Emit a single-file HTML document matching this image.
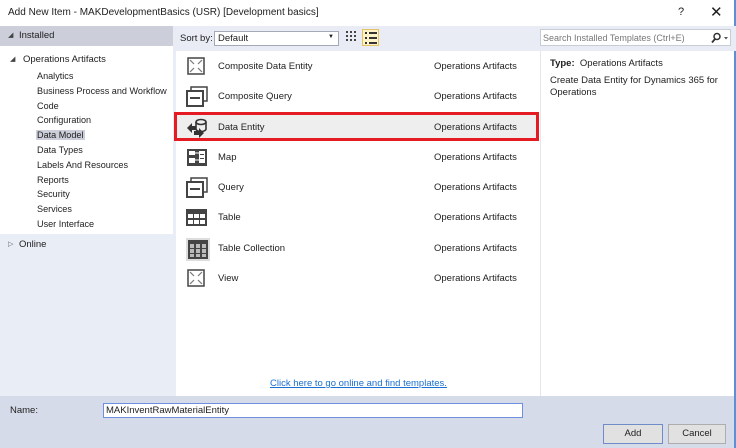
<!DOCTYPE html>
<html><head><style>
*{margin:0;padding:0;box-sizing:border-box}
body{width:736px;height:448px;overflow:hidden;background:#fff;font-family:"Liberation Sans",sans-serif;font-size:9.5px;color:#1e1e1e;position:relative}
.a{position:absolute;white-space:nowrap}
.row{position:absolute;left:176px;width:362px;height:30px}
.row .n{position:absolute;left:42px;top:10px}
.row .c{position:absolute;left:258px;top:10px}
.row svg{position:absolute;left:10px;top:5px}
</style></head><body>
<div class="a" style="left:0;top:0;width:736px;height:26px;background:#fff"></div>
<div class="a" style="left:8px;top:7px;font-size:10px">Add New Item - MAKDevelopmentBasics (USR) [Development basics]</div>
<div class="a" style="left:678px;top:6px;font-size:11px">?</div>
<div class="a" style="left:710px;top:3px;font-size:15px">✕</div>
<div class="a" style="left:734px;top:0;width:2px;height:448px;background:#5b8fd6"></div>
<!-- left -->
<div class="a" style="left:0;top:26px;width:176px;height:370px;background:#e9edf6"></div>
<div class="a" style="left:0;top:26px;width:173px;height:20px;background:#ccced9"></div>
<div class="a" style="left:8px;top:31px;font-size:7px;color:#444">◢</div>
<div class="a" style="left:19px;top:30px">Installed</div>
<div class="a" style="left:0;top:46px;width:173px;height:188px;background:#fff"></div>
<div class="a" style="left:10px;top:55px;font-size:7px;color:#444">◢</div>
<div class="a" style="left:23px;top:54px">Operations Artifacts</div>
<div class="a" style="left:37px;top:69px;line-height:14.8px;font-size:9.1px">Analytics<br>Business Process and Workflow<br>Code<br>Configuration<br><span style="background:#ccced9;padding:0 1px;margin-left:-1px">Data Model</span><br>Data Types<br>Labels And Resources<br>Reports<br>Security<br>Services<br>User Interface</div>
<div class="a" style="left:8px;top:240px;font-size:7px;color:#666">▷</div>
<div class="a" style="left:19px;top:239px">Online</div>
<!-- middle -->
<div class="a" style="left:173px;top:26px;width:563px;height:25px;background:#e9ecf5"></div>
<div class="a" style="left:180px;top:33px">Sort by:</div>
<div class="a" style="left:214px;top:31px;width:125px;height:15px;background:#fff;border:1px solid #a5a9b5"></div>
<div class="a" style="left:218px;top:33px">Default</div>
<div class="a" style="left:328px;top:34px;font-size:6px">▼</div>
<svg class="a" style="left:346px;top:31px" width="12" height="12"><g fill="#444"><rect x="0" y="0" width="2" height="2"/><rect x="4" y="0" width="2" height="2"/><rect x="8" y="0" width="2" height="2"/><rect x="0" y="4" width="2" height="2"/><rect x="4" y="4" width="2" height="2"/><rect x="8" y="4" width="2" height="2"/><rect x="0" y="8" width="2" height="2"/><rect x="4" y="8" width="2" height="2"/><rect x="8" y="8" width="2" height="2"/></g></svg>
<div class="a" style="left:362px;top:29px;width:17px;height:17px;background:#fdf3c8;border:1px solid #e5c365"></div>
<svg class="a" style="left:365px;top:32px" width="12" height="12"><g fill="#333"><rect x="0" y="0" width="2" height="2"/><rect x="4" y="0" width="8" height="2"/><rect x="0" y="5" width="2" height="2"/><rect x="4" y="5" width="8" height="2"/><rect x="0" y="10" width="2" height="2"/><rect x="4" y="10" width="8" height="2"/></g></svg>
<div class="a" style="left:540px;top:51px;width:1px;height:345px;background:#e3e5ea"></div>
<div class="a" style="left:540px;top:29px;width:191px;height:17px;background:#fff;border:1px solid #c8ccd6"></div>
<div class="a" style="left:543px;top:33px;color:#777;font-size:9px">Search Installed Templates (Ctrl+E)</div>
<svg class="a" style="left:710px;top:32px" width="20" height="12"><circle cx="7" cy="4.5" r="3" fill="none" stroke="#333" stroke-width="1.5"/><path d="M5 7l-3 3.5" stroke="#333" stroke-width="1.8"/><path d="M14 5h4l-2 2.5z" fill="#555"/></svg>

<div class="a" style="left:174px;top:112px;width:365px;height:29px;background:#eeeeee;border:3px solid #e41b23"></div>

<div class="row" style="top:51px"><svg width="20" height="20"><rect x="2" y="2" width="16" height="16" fill="none" stroke="#444" stroke-width="1.5"/><path d="M4 4l4 4M16 4l-4 4M4 16l4-4M16 16l-4-4" stroke="#777" stroke-width="1.2"/></svg><span class="n">Composite Data Entity</span><span class="c">Operations Artifacts</span></div>
<div class="row" style="top:81px"><svg width="22" height="22"><rect x="5" y="1" width="16" height="14" fill="none" stroke="#444" stroke-width="1.5"/><rect x="1" y="5" width="16" height="15" fill="#fff" stroke="#444" stroke-width="2"/><rect x="4" y="11" width="10" height="2" fill="#444"/></svg><span class="n">Composite Query</span><span class="c">Operations Artifacts</span></div>
<div class="row" style="top:112px"><svg width="22" height="22"><path d="M1 11l5-5v3h4v4h-4v3z" fill="#333"/><ellipse cx="15" cy="5" rx="5" ry="2.5" fill="none" stroke="#333" stroke-width="1.6"/><path d="M10 5v7c0 1.5 2.5 2.5 5 2.5s5-1 5-2.5v-7" fill="none" stroke="#333" stroke-width="1.6"/><path d="M8 14h5v-3l5 5-5 5v-3h-5z" fill="#333"/></svg><span class="n">Data Entity</span><span class="c">Operations Artifacts</span></div>
<div class="row" style="top:142px"><svg width="22" height="22"><rect x="1" y="2" width="20" height="17" fill="#444"/><rect x="3" y="4" width="6" height="4" fill="#fff"/><rect x="3" y="11" width="6" height="5" fill="#fff"/><rect x="13" y="4" width="6" height="12" fill="#fff"/><rect x="14" y="7" width="4" height="1" fill="#444"/><rect x="14" y="11" width="4" height="1" fill="#444"/><path d="M9 6h4M9 13h4" stroke="#fff"/></svg><span class="n">Map</span><span class="c">Operations Artifacts</span></div>
<div class="row" style="top:172px"><svg width="22" height="22"><rect x="5" y="1" width="16" height="14" fill="none" stroke="#444" stroke-width="1.5"/><rect x="1" y="5" width="16" height="15" fill="#fff" stroke="#444" stroke-width="2"/><rect x="4" y="11" width="10" height="2" fill="#444"/></svg><span class="n">Query</span><span class="c">Operations Artifacts</span></div>
<div class="row" style="top:202px"><svg width="22" height="22"><rect x="0" y="2" width="21" height="17" fill="#444"/><g fill="#fff"><rect x="2" y="7" width="5" height="4"/><rect x="8" y="7" width="5" height="4"/><rect x="14" y="7" width="5" height="4"/><rect x="2" y="13" width="5" height="4"/><rect x="8" y="13" width="5" height="4"/><rect x="14" y="13" width="5" height="4"/></g></svg><span class="n">Table</span><span class="c">Operations Artifacts</span></div>
<div class="row" style="top:233px"><svg width="24" height="24"><rect x="0" y="0" width="24" height="23" fill="#ddd"/><rect x="2" y="2" width="20" height="19" fill="#444"/><g fill="#bbb"><rect x="4" y="6" width="4" height="4"/><rect x="10" y="6" width="4" height="4"/><rect x="16" y="6" width="4" height="4"/><rect x="4" y="11" width="4" height="4"/><rect x="10" y="11" width="4" height="4"/><rect x="16" y="11" width="4" height="4"/><rect x="4" y="16" width="4" height="3"/><rect x="10" y="16" width="4" height="3"/><rect x="16" y="16" width="4" height="3"/></g></svg><span class="n">Table Collection</span><span class="c">Operations Artifacts</span></div>
<div class="row" style="top:263px"><svg width="20" height="20"><rect x="2" y="2" width="16" height="16" fill="none" stroke="#444" stroke-width="1.5"/><path d="M4 4l4 4M16 4l-4 4M4 16l4-4M16 16l-4-4" stroke="#777" stroke-width="1.2"/></svg><span class="n">View</span><span class="c">Operations Artifacts</span></div>

<div class="a" style="left:270px;top:378px;color:#1a6fd0;text-decoration:underline">Click here to go online and find templates.</div>
<!-- right info -->
<div class="a" style="left:550px;top:58px"><b>Type:</b>&nbsp; Operations Artifacts</div>
<div class="a" style="left:550px;top:75px;line-height:12px">Create Data Entity for Dynamics 365 for<br>Operations</div>
<!-- bottom -->
<div class="a" style="left:0;top:396px;width:734px;height:52px;background:#d6dbe9"></div>
<div class="a" style="left:10px;top:405px">Name:</div>
<div class="a" style="left:103px;top:403px;width:420px;height:15px;background:#fff;border:1px solid #6e8ee0"></div>
<div class="a" style="left:106px;top:405px">MAKInventRawMaterialEntity</div>
<div class="a" style="left:603px;top:424px;width:60px;height:20px;background:#e1e1e1;border:1px solid #6f8bc9;text-align:center;line-height:18px">Add</div>
<div class="a" style="left:668px;top:424px;width:58px;height:20px;background:#e1e1e1;border:1px solid #adadad;text-align:center;line-height:18px">Cancel</div>
</body></html>
